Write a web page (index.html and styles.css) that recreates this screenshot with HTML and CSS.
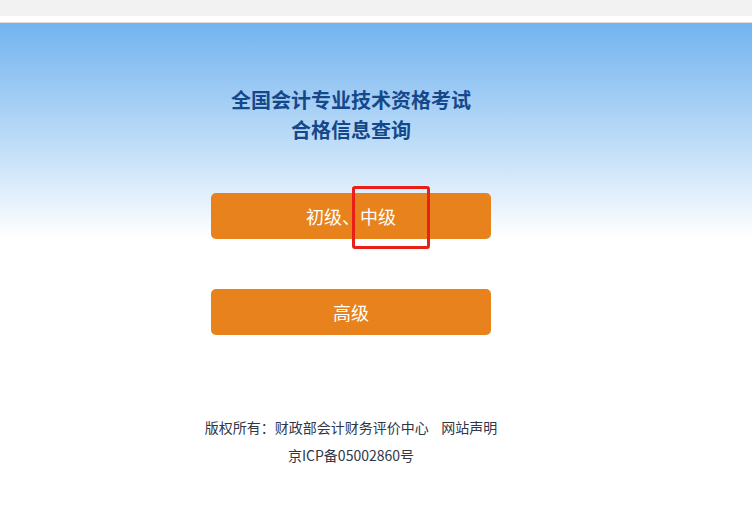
FILE: index.html
```html
<!DOCTYPE html>
<html>
<head>
    <meta charset='utf-8'>
    <title>全国会计专业技术资格考试合格信息查询</title>
    <meta name='viewport' content='width=device-width, initial-scale=1'>
    <link rel="stylesheet" href="styles.css">
</head>

<body>
    <div class="topBar"></div>
    <div class="topGap"></div>

    <div id="main">
        <div class="content">
            <h1 class="title">全国会计专业技术资格考试<br>合格信息查询</h1>

            <div class="btnList">
                <div class="btnWrap">
                    <a class="levelBtn" href="#">初级、中级</a>
                    <span class="mark"></span>
                </div>
                <div class="btnWrap">
                    <a class="levelBtn" href="#">高级</a>
                </div>
            </div>

            <div class="footer">
                <p>版权所有：财政部会计财务评价中心&nbsp;&nbsp;&nbsp;&nbsp;网站声明</p>
                <p>京ICP备05002860号</p>
            </div>
        </div>
    </div>
</body>
</html>
```

FILE: styles.css
```css
/* Page */
body {
    margin: 0;
    font-family: "Noto Sans CJK SC", "Noto Sans", sans-serif;
    background: #fff;
}

.topBar {
    height: 16px;
    background: #f2f2f2;
}

.topGap {
    height: 6px;
    background: #fff;
    border-bottom: 1px solid #dcdcdc;
}

/* Main */
#main {
    padding-top: 62px;
    background: linear-gradient(to bottom, #72b3f0 0px, #c4e0f8 130px, #ffffff 215px, #ffffff 100%);
    min-height: 430px;
}

.content {
    width: 702px;
    text-align: center;
}

.title {
    margin: 0;
    font-size: 20px;
    line-height: 30px;
    font-weight: bold;
    color: #15488a;
}

/* Buttons */
.btnList {
    margin: 48px auto 0;
    width: 280px;
    display: flex;
    flex-direction: column;
    gap: 50px;
}

.btnWrap {
    position: relative;
}

.levelBtn {
    display: block;
    height: 46px;
    line-height: 46px;
    border-radius: 5px;
    background: #e8821c;
    color: #fff;
    font-size: 18px;
    text-decoration: none;
}

.mark {
    position: absolute;
    left: 141px;
    top: -7px;
    width: 72px;
    height: 57px;
    border: 3px solid #e82018;
    border-radius: 3px;
}

/* Footer */
.footer {
    margin-top: 78px;
    font-size: 14px;
    line-height: 28px;
    color: #2f3747;
}

.footer p {
    margin: 0;
}
```
